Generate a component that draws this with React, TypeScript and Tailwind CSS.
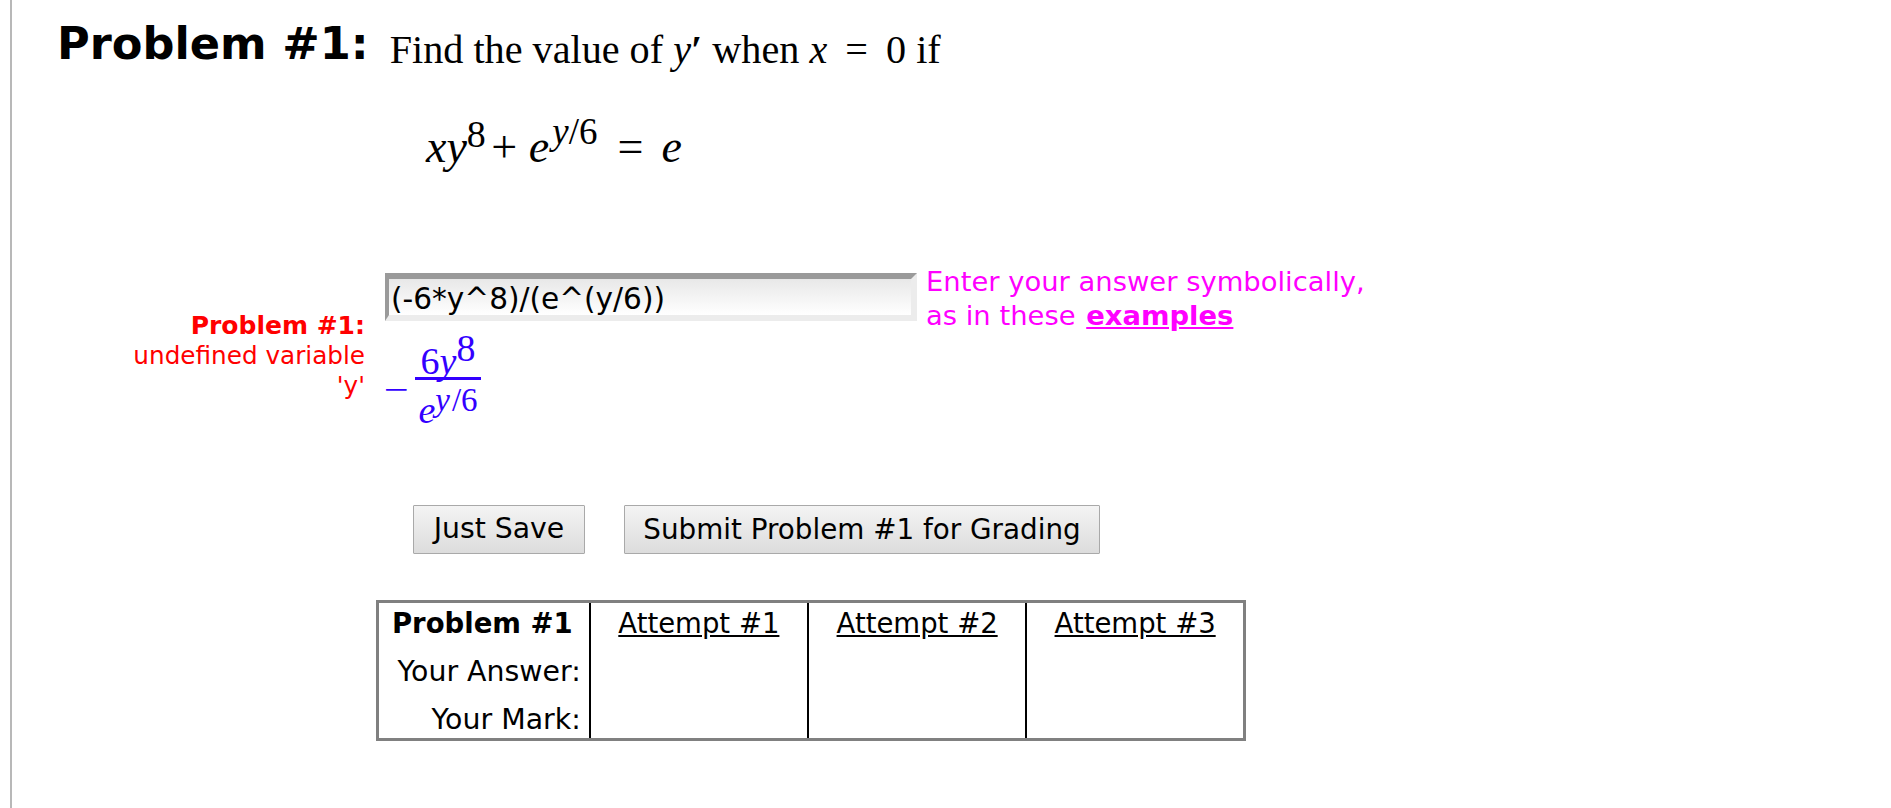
const SANS = "font-['DejaVu_Sans',Verdana,sans-serif]";
const SERIF = "font-['Liberation_Serif','Times_New_Roman',serif]";

const ATTEMPTS = ['Attempt #1', 'Attempt #2', 'Attempt #3'];

function Fraction() {
  return (
    <div className={`flex items-center text-[#3300ff] ${SERIF}`}>
      <span className="mr-[8px] mt-[18px] w-[22px] scale-x-[1.3] text-center text-[34px] leading-none">−</span>
      <div className="flex flex-col items-center">
        <div className="w-[66px] border-b-[3px] border-[#3300ff] text-center text-[38px] leading-[42px]">
          <span className="inline-block translate-y-[5px]">
            6<i>y</i>
            <span className="align-[13px] text-[38px] leading-none">8</span>
          </span>
        </div>
        <div className="mt-[3px] h-[54px] w-[66px] whitespace-nowrap text-center text-[38px] leading-[54px]">
          <i>e</i>
          <span className="align-[12px] text-[33px] leading-none">
            <i>y</i>
            <span className="ml-[2px]">/6</span>
          </span>
        </div>
      </div>
    </div>
  );
}

function AttemptsTable() {
  return (
    <table className="ml-[364px] mt-[46px] w-[870px] border-collapse border-[3px] border-[#808080] text-[27.5px] text-black">
      <tbody>
        <tr>
          <th className="w-[212px] border-r-2 border-black pr-[16px] text-right font-bold leading-[40px]">Problem #1</th>
          {ATTEMPTS.map((a, i) => (
            <td key={a} className={`w-[218px] text-center leading-[40px] ${i < 2 ? 'border-r-2 border-black' : ''}`}>
              <a className="underline">{a}</a>
            </td>
          ))}
        </tr>
        <tr>
          <td className="border-r-2 border-black pr-[8px] text-right text-[28.4px] leading-[58px]">Your Answer:</td>
          <td className="border-r-2 border-black" />
          <td className="border-r-2 border-black" />
          <td />
        </tr>
        <tr>
          <td className="border-r-2 border-black pr-[8px] text-right text-[28.4px] leading-[37px]">Your Mark:</td>
          <td className="border-r-2 border-black" />
          <td className="border-r-2 border-black" />
          <td />
        </tr>
      </tbody>
    </table>
  );
}

export default function App() {
  return (
    <div className={`h-[808px] overflow-hidden bg-white ${SANS}`}>
      <div className="ml-[10px] h-full border-l-2 border-[#b8b8b8] bg-white">
        <div className="flex items-baseline pl-[45px] pt-[12px]">
          <span className="text-[44.7px] font-bold leading-[64px] text-black">Problem #1:</span>
          <span className={`ml-[21px] translate-y-[4px] text-[40.2px] leading-[64px] text-black ${SERIF}`}>
            Find the value of <i>y</i>
            <b className="not-italic">′</b> when <i>x</i> <span className="mx-[8px]">=</span> 0 if
          </span>
        </div>

        <div className={`ml-[414px] mt-[35px] text-[46px] leading-[60px] text-black ${SERIF}`}>
          <i>xy</i>
          <span className="align-[15px] text-[38px] leading-none">8</span> <span className="-ml-[6px]">+</span> <i>e</i>
          <span className="ml-[3px] align-[18px] text-[37px] leading-none">
            <i>y</i>/6
          </span>
          <span className="ml-[20px] mr-[18px]">=</span>
          <i>e</i>
        </div>

        <div className="mt-[88px] flex h-[220px] items-start">
          <div className="mt-[46px] w-[353px] text-right text-[24.7px] leading-[30px] text-[#ff0000]">
            <div className="text-[25px] font-bold">Problem #1:</div>
            <div className="ml-auto w-[260px]">undefined variable 'y'</div>
          </div>
          <div className="ml-[20px] mt-[8px] w-[532px]">
            <div className="h-[48px] border-y-[6px] border-l-4 border-r-[6px] border-b-[#ececec] border-l-[#9a9a9a] border-r-[#ececec] border-t-[#9a9a9a] bg-gradient-to-b from-[#e8e8e8] to-white pl-[2px] text-[29.6px] leading-[40px] text-black">
              (-6*y^8)/(e^(y/6))
            </div>
            <div className="mt-[3px]">
              <Fraction />
            </div>
          </div>
          <div className="ml-[9px] text-[27.4px] leading-[34px] text-[#ff00ff]">
            Enter your answer symbolically,
            <br />
            as in these <a className="ml-[2px] font-bold underline">examples</a>
          </div>
        </div>

        <div className="ml-[401px] mt-[20px] flex gap-[39px] text-black">
          <button className="h-[49px] w-[172px] rounded-[1px] border border-[#a9a9a9] bg-gradient-to-b from-[#f4f4f4] to-[#dcdcdc] text-[28.3px]">
            Just Save
          </button>
          <button className="h-[49px] w-[476px] rounded-[1px] border border-[#a9a9a9] bg-gradient-to-b from-[#f4f4f4] to-[#dcdcdc] text-[27.8px]">
            Submit Problem #1 for Grading
          </button>
        </div>

        <AttemptsTable />
      </div>
    </div>
  );
}
